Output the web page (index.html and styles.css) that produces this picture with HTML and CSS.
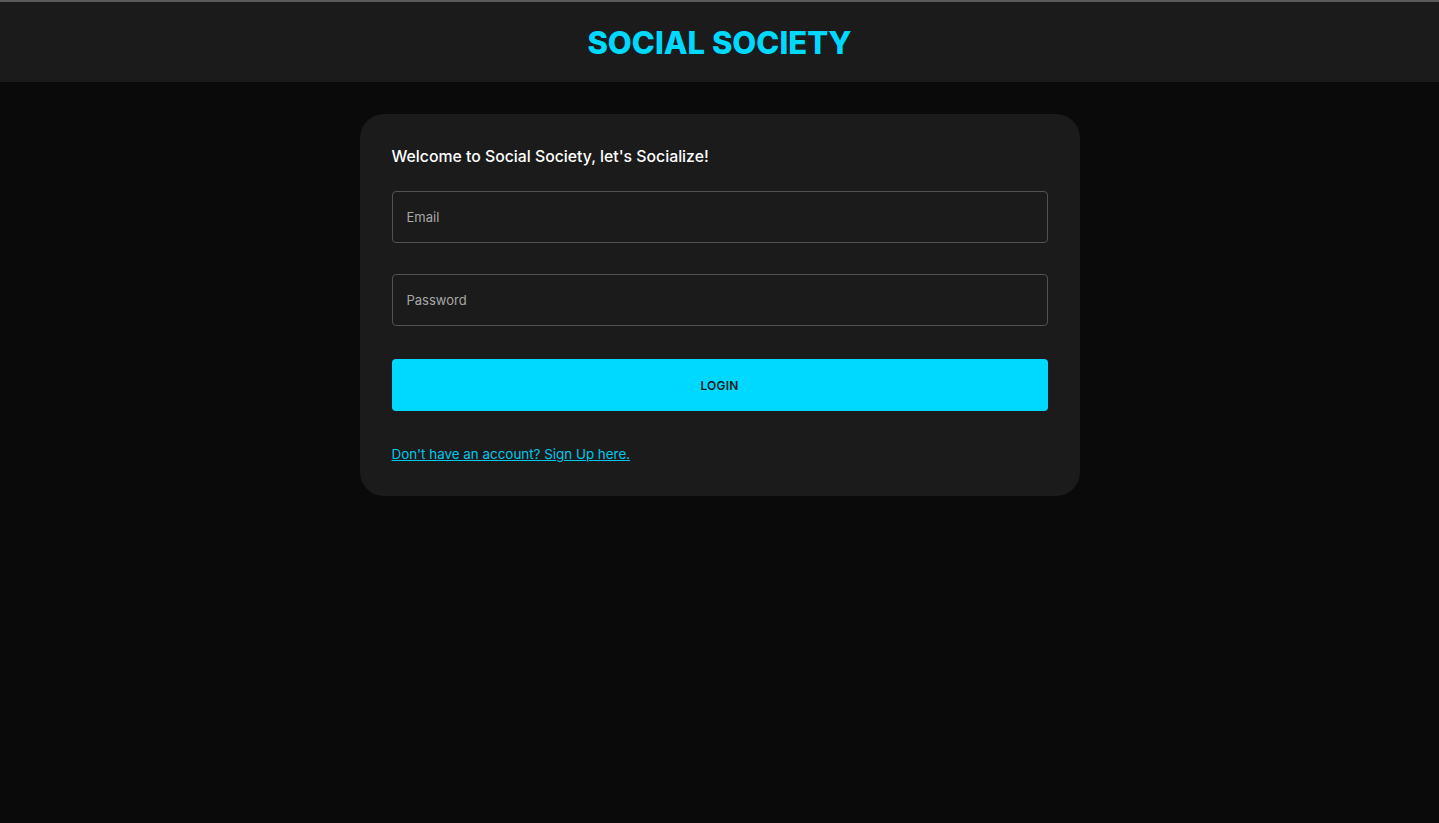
FILE: index.html
```html
<!DOCTYPE html>
<html lang="en">
<head>
<meta charset="utf-8">
<title>Social Society</title>
<link rel="stylesheet" href="styles.css">
</head>
<body>
<header class="topbar">
  <h1 class="brand">SOCIAL SOCIETY</h1>
</header>
<main class="page">
  <form class="card">
    <h2 class="welcome">Welcome to Social Society, let's Socialize!</h2>
    <input class="field field-email" type="email" placeholder="Email">
    <input class="field field-password" type="password" placeholder="Password">
    <button class="login" type="button">LOGIN</button>
    <a class="signup" href="#">Don't have an account? Sign Up here.</a>
  </form>
</main>
</body>
</html>
```

FILE: styles.css
```css
* { box-sizing: border-box; }
html, body {
  margin: 0;
  padding: 0;
  background: #0a0a0a;
  font-family: "Inter", "Noto Sans", "Liberation Sans", sans-serif;
  color: #ffffff;
  height: 100%;
}
.topbar {
  border-top: 2px solid #5a5a5a;
  background: #1b1b1b;
  height: 82px;
  display: flex;
  align-items: center;
  justify-content: center;
}
.brand {
  margin: 0;
  font-size: 31px;
  font-weight: 800;
  color: #00d9ff;
  letter-spacing: 0;
  line-height: 1;
}
.page {
  display: flex;
  justify-content: center;
  padding-top: 32px;
}
.card {
  width: 720px;
  background: #1b1b1b;
  border-radius: 24px;
  padding: 31px 32px 32px;
  display: flex;
  flex-direction: column;
}
.welcome {
  margin: 0 0 22px;
  font-size: 15.8px;
  font-weight: 500;
  line-height: 24px;
  color: #ffffff;
}
.field {
  height: 52px;
  width: 100%;
  background: #1b1b1b;
  border: 1px solid #525252;
  border-radius: 4px;
  padding: 0 14px;
  font-family: inherit;
  font-size: 13px;
  color: #ffffff;
  outline: none;
}
.field::placeholder { color: #a8a8a8; }
.field-email { margin-bottom: 31px; }
.field-password { margin-bottom: 33px; }
.login {
  height: 52px;
  width: 100%;
  border: none;
  border-radius: 4px;
  background: #00d9ff;
  color: #1b1b1b;
  font-family: inherit;
  font-size: 12px;
  font-weight: 600;
  letter-spacing: 0.2px;
  cursor: pointer;
  margin-bottom: 33px;
}
.signup {
  align-self: flex-start;
  font-size: 13.4px;
  line-height: 20px;
  color: #00c8ec;
  text-decoration: underline;
}
```
